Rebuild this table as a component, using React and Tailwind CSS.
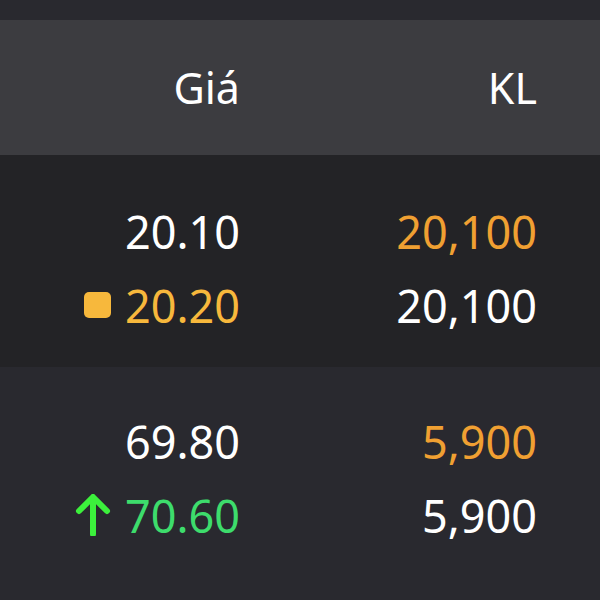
import React from 'react';

const font = { fontFamily: '"Noto Sans", "Open Sans", sans-serif' };

const Row = ({ price, vol, priceColor = 'text-white', volColor = 'text-white', mark }) => (
  <div className="flex items-center h-[74px]">
    <div className={`w-[240px] flex items-center justify-end gap-[14px] ${priceColor}`}>
      {mark}
      <span>{price}</span>
    </div>
    <div className={`w-[297px] text-right ${volColor}`}>{vol}</div>
  </div>
);

const Square = () => <span className="w-[27px] h-[26px] rounded-[5px] bg-[#f7b83c]" />;

const Arrow = () => (
  <svg width="36" height="42" viewBox="0 0 36 42" fill="none">
    <path d="M18 40V4M4 17L18 3L32 17" stroke="#3cf03c" strokeWidth="6" strokeLinecap="round" strokeLinejoin="round" />
  </svg>
);

export default function App() {
  return (
    <div className="w-[600px] h-[600px] overflow-hidden bg-[#29292f] text-[45px] leading-none" style={font}>
      <div className="h-[20px] bg-[#29292f]" />
      {/* header */}
      <div className="h-[135px] bg-[#3c3c40] flex items-center text-white text-[43px]">
        <div className="w-[240px] text-right">Giá</div>
        <div className="w-[297px] text-right">KL</div>
      </div>

      <div className="h-[212px] bg-[#232326] pt-[39px]">
        <Row price="20.10" vol="20,100" volColor="text-[#f0a032]" />
        <Row price="20.20" vol="20,100" priceColor="text-[#f7b83c]" mark={<Square />} />
      </div>

      <div className="pt-[37px]">
        <Row price="69.80" vol="5,900" volColor="text-[#f0a032]" />
        <Row price="70.60" vol="5,900" priceColor="text-[#3ddc6c]" mark={<Arrow />} />
      </div>
    </div>
  );
}
